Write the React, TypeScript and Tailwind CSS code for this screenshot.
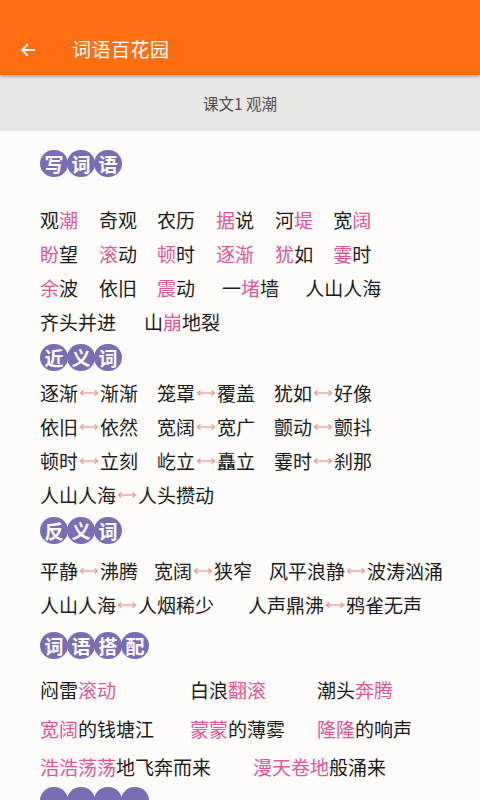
import React from "react";

const PINK = "text-[#e2559a]";

type Seg = { t: string; p?: boolean };

function parse(s: string): Seg[] {
  const out: Seg[] = [];
  const re = /\[([^\]]+)\]|([^\[]+)/g;
  let m: RegExpExecArray | null;
  while ((m = re.exec(s))) {
    if (m[1]) out.push({ t: m[1], p: true });
    else out.push({ t: m[2] });
  }
  return out;
}

function Word({ s, ml }: { s: string; ml: string }) {
  return (
    <span className={ml + " whitespace-nowrap"}>
      {parse(s).map((g, i) => (
        <span key={i} className={g.p ? PINK : ""}>
          {g.t}
        </span>
      ))}
    </span>
  );
}

function Arrow() {
  return (
    <svg width="20" height="8" viewBox="0 0 20 8" className="mx-[1px] shrink-0">
      <line x1="2" y1="4" x2="18" y2="4" stroke="#ec9191" strokeWidth="1.2" />
      <path d="M4.5 1.5 L1.5 4 L4.5 6.5" fill="none" stroke="#ec9191" strokeWidth="1.2" />
      <path d="M15.5 1.5 L18.5 4 L15.5 6.5" fill="none" stroke="#ec9191" strokeWidth="1.2" />
    </svg>
  );
}

function Pair({ a, b, ml }: { a: string; b: string; ml: string }) {
  return (
    <span className={ml + " flex items-center whitespace-nowrap"}>
      <span>{a}</span>
      <Arrow />
      <span>{b}</span>
    </span>
  );
}

function Badge({ chars, mt, count }: { chars?: string[]; mt: string; count?: number }) {
  const items = chars ?? Array.from({ length: count ?? 0 }, () => "");
  return (
    <div className={mt + " flex h-[27px] items-center"}>
      {items.map((c, i) => (
        <span
          key={i}
          className={
            (i > 0 ? "-ml-[1px] " : "") +
            "flex h-[27px] w-[28px] items-center justify-center rounded-full bg-[#7a6db3] text-[19px] font-bold leading-none text-white"
          }
        >
          {c}
        </span>
      ))}
    </div>
  );
}

export default function App() {
  return (
    <div className="flex h-[800px] w-[480px] flex-col overflow-hidden bg-white font-['Noto_Sans_CJK_SC',sans-serif]">
      <header className="relative z-10 flex h-[75px] shrink-0 items-center bg-[#ff6f11] pt-[24px] shadow-[0_2px_3px_rgba(0,0,0,0.25)]">
        <svg width="18" height="18" viewBox="0 0 24 24" className="ml-[19px]">
          <path d="M20 12H5M11 5l-7 7 7 7" fill="none" stroke="white" strokeWidth="2.4" strokeLinecap="square" />
        </svg>
        <span className="ml-[35px] text-[19px] tracking-[0.5px] text-white">词语百花园</span>
      </header>
      <div className="flex h-[56px] shrink-0 items-center justify-center bg-[#e8e7e5] pt-[2px] text-[15.5px] text-[#4d4d4d]">
        课文1 观潮
      </div>
      <div className="flex-1 bg-[#fdfcfb] pl-[40px] text-[19px] text-[#1a1a1a]">
        <Badge chars={["写", "词", "语"]} mt="mt-[19px]" />
        <div className="mt-[26px] flex flex-col leading-[34px]">
          <div className="flex">
            <Word s="观[潮]" ml="" />
            <Word s="奇观" ml="ml-[21px]" />
            <Word s="农历" ml="ml-[20px]" />
            <Word s="[据]说" ml="ml-[21px]" />
            <Word s="河[堤]" ml="ml-[21px]" />
            <Word s="宽[阔]" ml="ml-[20px]" />
          </div>
          <div className="flex">
            <Word s="[盼]望" ml="" />
            <Word s="[滚]动" ml="ml-[21px]" />
            <Word s="[顿]时" ml="ml-[20px]" />
            <Word s="[逐渐]" ml="ml-[21px]" />
            <Word s="[犹]如" ml="ml-[21px]" />
            <Word s="[霎]时" ml="ml-[20px]" />
          </div>
          <div className="flex">
            <Word s="[余]波" ml="" />
            <Word s="依旧" ml="ml-[21px]" />
            <Word s="[震]动" ml="ml-[20px]" />
            <Word s="一[堵]墙" ml="ml-[27px]" />
            <Word s="人山人海" ml="ml-[26px]" />
          </div>
          <div className="flex">
            <Word s="齐头并进" ml="" />
            <Word s="山[崩]地裂" ml="ml-[28px]" />
          </div>
        </div>

        <Badge chars={["近", "义", "词"]} mt="mt-[5px]" />
        <div className="mt-[5px] flex flex-col leading-[34px]">
          <div className="flex">
            <Pair a="逐渐" b="渐渐" ml="" />
            <Pair a="笼罩" b="覆盖" ml="ml-[19px]" />
            <Pair a="犹如" b="好像" ml="ml-[19px]" />
          </div>
          <div className="flex">
            <Pair a="依旧" b="依然" ml="" />
            <Pair a="宽阔" b="宽广" ml="ml-[19px]" />
            <Pair a="颤动" b="颤抖" ml="ml-[19px]" />
          </div>
          <div className="flex">
            <Pair a="顿时" b="立刻" ml="" />
            <Pair a="屹立" b="矗立" ml="ml-[19px]" />
            <Pair a="霎时" b="刹那" ml="ml-[19px]" />
          </div>
          <div className="flex">
            <Pair a="人山人海" b="人头攒动" ml="" />
          </div>
        </div>

        <Badge chars={["反", "义", "词"]} mt="mt-[5px]" />
        <div className="mt-[10px] flex flex-col leading-[34px]">
          <div className="flex">
            <Pair a="平静" b="沸腾" ml="" />
            <Pair a="宽阔" b="狭窄" ml="ml-[16px]" />
            <Pair a="风平浪静" b="波涛汹涌" ml="ml-[17px]" />
          </div>
          <div className="flex">
            <Pair a="人山人海" b="人烟稀少" ml="" />
            <Pair a="人声鼎沸" b="鸦雀无声" ml="ml-[34px]" />
          </div>
        </div>

        <Badge chars={["词", "语", "搭", "配"]} mt="mt-[10px]" />
        <div className="mt-[12px] flex flex-col leading-[38.5px]">
          <div className="flex">
            <span className="w-[150px]"><Word s="闷雷[滚动]" ml="" /></span>
            <span className="w-[127px]"><Word s="白浪[翻滚]" ml="" /></span>
            <Word s="潮头[奔腾]" ml="" />
          </div>
          <div className="flex">
            <span className="w-[150px]"><Word s="[宽阔]的钱塘江" ml="" /></span>
            <span className="w-[127px]"><Word s="[蒙蒙]的薄雾" ml="" /></span>
            <Word s="[隆隆]的响声" ml="" />
          </div>
          <div className="flex">
            <span className="w-[213px]"><Word s="[浩浩荡荡]地飞奔而来" ml="" /></span>
            <Word s="[漫天卷地]般涌来" ml="" />
          </div>
        </div>
        <Badge count={4} mt="mt-[0px]" />
      </div>
    </div>
  );
}
